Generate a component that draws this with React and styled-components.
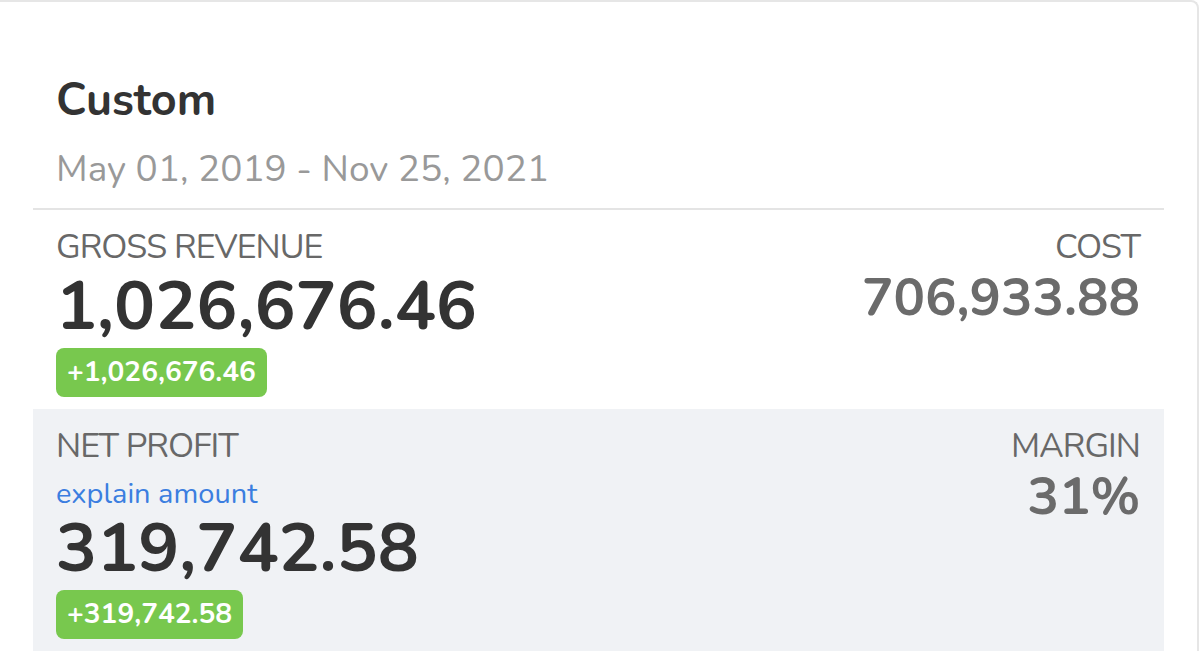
import React from "react";
import styled, { createGlobalStyle } from "styled-components";

const Global = createGlobalStyle`
  html, body { margin: 0; padding: 0; background: #ffffff; }
  body { font-family: "Nunito", "Lato", "Open Sans", sans-serif; }
  * { box-sizing: border-box; }
`;

const Card = styled.div`
  width: 1199px;
  height: 651px;
  overflow: hidden;
  background: #ffffff;
  border-top: 2px solid #e6e6e6;
  border-right: 2px solid #e6e6e6;
  border-top-right-radius: 8px;
  padding: 0 33px 0 33px;
  display: flex;
  flex-direction: column;
`;

const Header = styled.div`
  padding: 75px 24px 18px 23px;
  border-bottom: 2px solid #e4e4e4;
  display: flex;
  flex-direction: column;
  gap: 23px;
`;

const Title = styled.h1`
  margin: 0;
  font-size: 45px;
  line-height: 48px;
  font-weight: 700;
  color: #333333;
`;

const Range = styled.div`
  font-size: 37px;
  line-height: 42px;
  color: #999999;
`;

const Section = styled.div`
  display: flex;
  justify-content: space-between;
  align-items: flex-start;
  padding: 17px 24px 12px 23px;
  background: ${(p) => (p.$shaded ? "#f0f2f5" : "transparent")};
  flex: ${(p) => (p.$grow ? 1 : "none")};
`;

const Col = styled.div`
  display: flex;
  flex-direction: column;
  align-items: ${(p) => (p.$right ? "flex-end" : "flex-start")};
`;

const Label = styled.div`
  font-size: 34px;
  line-height: 40px;
  color: #686868;
  letter-spacing: -1px;
`;

const Link = styled.a`
  display: block;
  margin-top: 10px;
  font-size: 29px;
  line-height: 35px;
  color: #3b7ee0;
  text-decoration: none;
  cursor: pointer;
`;

const Big = styled.div`
  margin-top: ${(p) => p.$gap || "2px"};
  font-size: 68.5px;
  line-height: 76px;
  font-weight: 700;
  color: #333333;
`;

const Side = styled.div`
  margin-top: 2px;
  font-size: 52.5px;
  line-height: 58px;
  font-weight: 700;
  color: #6b6b6b;
`;

const Badge = styled.span`
  display: inline-block;
  margin-top: 3px;
  background: #78c84e;
  color: #ffffff;
  font-size: 28px;
  line-height: 49px;
  font-weight: 700;
  padding: 0 11px;
  border-radius: 8px;
`;

export default function App() {
  return (
    <>
      <Global />
      <Card>
        <Header>
          <Title>Custom</Title>
          <Range>May 01, 2019 - Nov 25, 2021</Range>
        </Header>
        <Section>
          <Col>
            <Label>GROSS REVENUE</Label>
            <Big>1,026,676.46</Big>
            <Badge>+1,026,676.46</Badge>
          </Col>
          <Col $right>
            <Label>COST</Label>
            <Side>706,933.88</Side>
          </Col>
        </Section>
        <Section $shaded $grow>
          <Col>
            <Label>NET PROFIT</Label>
            <Link>explain amount</Link>
            <Big $gap="0px">319,742.58</Big>
            <Badge>+319,742.58</Badge>
          </Col>
          <Col $right>
            <Label>MARGIN</Label>
            <Side>31%</Side>
          </Col>
        </Section>
      </Card>
    </>
  );
}
